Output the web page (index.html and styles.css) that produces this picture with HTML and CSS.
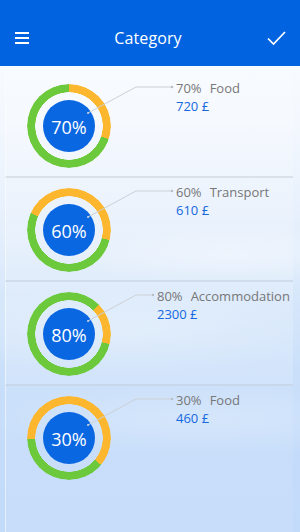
FILE: index.html
```html
<!DOCTYPE html>
<html lang="en">
<head>
<meta charset="utf-8">
<title>Category</title>
<link rel="stylesheet" href="styles.css">
</head>
<body>
<header class="appbar">
  <svg class="appbar-icon" width="16" height="14" viewBox="0 0 16 14" aria-hidden="true">
    <path d="M1 2h14M1 7h14M1 12h14" stroke="#fff" stroke-width="1.8" fill="none"/>
  </svg>
  <h1 class="appbar-title">Category</h1>
  <svg class="appbar-icon" width="20" height="16" viewBox="0 0 20 16" aria-hidden="true">
    <path d="M2 8.5l5.5 5.5L19 2" stroke="#fff" stroke-width="1.7" fill="none"/>
  </svg>
</header>
<main class="list">
  <section class="row">
    <div class="ring" style="--s:108deg;--g:252deg"><div class="core">70%</div></div>
    <svg class="leader" viewBox="0 0 288 102" aria-hidden="true">
      <circle cx="82" cy="39" r="1" fill="#cfd6df"/>
      <path d="M82 39L130 13H166" stroke="#cdd1d7" stroke-width="1" fill="none"/>
      <circle cx="166" cy="13" r="1.2" fill="#b9bec6"/>
    </svg>
    <div class="label">
      <div class="label-title">70%<span class="label-name">Food</span></div>
      <div class="label-value">720 £</div>
    </div>
  </section>
  <section class="row">
    <div class="ring" style="--s:104deg;--g:190deg"><div class="core">60%</div></div>
    <svg class="leader" viewBox="0 0 288 102" aria-hidden="true">
      <circle cx="82" cy="39" r="1" fill="#cfd6df"/>
      <path d="M82 39L130 13H166" stroke="#cdd1d7" stroke-width="1" fill="none"/>
      <circle cx="166" cy="13" r="1.2" fill="#b9bec6"/>
    </svg>
    <div class="label">
      <div class="label-title">60%<span class="label-name">Transport</span></div>
      <div class="label-value">610 £</div>
    </div>
  </section>
  <section class="row">
    <div class="ring" style="--s:104deg;--g:301deg"><div class="core">80%</div></div>
    <svg class="leader" viewBox="0 0 288 102" aria-hidden="true">
      <circle cx="82" cy="39" r="1" fill="#cfd6df"/>
      <path d="M82 39L130 13H147" stroke="#cdd1d7" stroke-width="1" fill="none"/>
      <circle cx="147" cy="13" r="1.2" fill="#b9bec6"/>
    </svg>
    <div class="label label-wide">
      <div class="label-title">80%<span class="label-name">Accommodation</span></div>
      <div class="label-value">2300 £</div>
    </div>
  </section>
  <section class="row row-last">
    <div class="ring" style="--s:130deg;--g:138deg"><div class="core">30%</div></div>
    <svg class="leader" viewBox="0 0 288 102" aria-hidden="true">
      <circle cx="82" cy="39" r="1" fill="#cfd6df"/>
      <path d="M82 39L130 13H166" stroke="#cdd1d7" stroke-width="1" fill="none"/>
      <circle cx="166" cy="13" r="1.2" fill="#b9bec6"/>
    </svg>
    <div class="label">
      <div class="label-title">30%<span class="label-name">Food</span></div>
      <div class="label-value">460 £</div>
    </div>
  </section>
</main>
</body>
</html>
```
FILE: styles.css
```css
* { box-sizing: border-box; }
html, body { margin: 0; padding: 0; }
body {
  width: 300px;
  height: 532px;
  overflow: hidden;
  display: flex;
  flex-direction: column;
  font-family: "Open Sans", "Noto Sans", sans-serif;
  background:
    radial-gradient(ellipse 260px 40px at 230px 255px, rgba(255,255,255,0.35), rgba(255,255,255,0) 70%),
    radial-gradient(ellipse 320px 60px at 120px 330px, rgba(255,255,255,0.25), rgba(255,255,255,0) 70%),
    radial-gradient(ellipse 360px 50px at 200px 420px, rgba(255,255,255,0.25), rgba(255,255,255,0) 70%),
    linear-gradient(180deg, #fbfdff 0px, #f4f8fe 120px, #e3eefc 240px, #cfe3fa 330px, #c4dcfa 420px, #c3dbfa 532px);
}
.appbar {
  height: 66px;
  flex: none;
  background: #0263e1;
  display: flex;
  align-items: center;
  justify-content: space-between;
  padding: 9px 14px 0 14px;
}
.appbar-title {
  margin: 0;
  font-size: 16px;
  font-weight: 400;
  color: #fff;
  letter-spacing: 0.1px;
}
.appbar-icon { display: block; }
.list {
  flex: 1;
  display: flex;
  flex-direction: column;
  padding-top: 8px;
}
.row {
  position: relative;
  height: 104px;
  flex: none;
  margin: 0 7px 0 5px;
  display: flex;
  align-items: flex-start;
  border-bottom: 2px solid rgba(190, 200, 214, 0.45);
  border-left: 1px solid rgba(255, 255, 255, 0.55);
  background: rgba(255, 255, 255, 0.18);
}
.row-last {
  flex: 1;
  border-bottom: 0;
  background: rgba(255, 255, 255, 0.08);
}
.ring {
  position: relative;
  width: 84px;
  height: 84px;
  margin: 10px 0 0 21px;
  display: grid;
  place-items: center;
  flex: none;
}
.ring::before {
  content: "";
  position: absolute;
  inset: 0;
  border-radius: 50%;
  background: conic-gradient(from var(--s), #6cc93b 0deg var(--g), #fdb72f var(--g) 360deg);
  -webkit-mask: radial-gradient(circle closest-side, transparent 33.5px, #000 34px);
  mask: radial-gradient(circle closest-side, transparent 33.5px, #000 34px);
}
.core {
  position: relative;
  width: 52px;
  height: 52px;
  border-radius: 50%;
  background: #0a67e2;
  color: #fff;
  font-size: 18px;
  display: grid;
  place-items: center;
  line-height: 1;
  padding-top: 1px;
}
.leader {
  position: absolute;
  left: 0;
  top: 0;
  width: 288px;
  height: 102px;
  pointer-events: none;
}
.label {
  margin: 5px 0 0 65px;
  font-size: 13px;
  line-height: 18px;
}
.label-wide { margin-left: 46px; }
.label-title { color: #777; white-space: nowrap; }
.label-name { margin-left: 8px; }
.label-value { color: #1468e0; }
```
